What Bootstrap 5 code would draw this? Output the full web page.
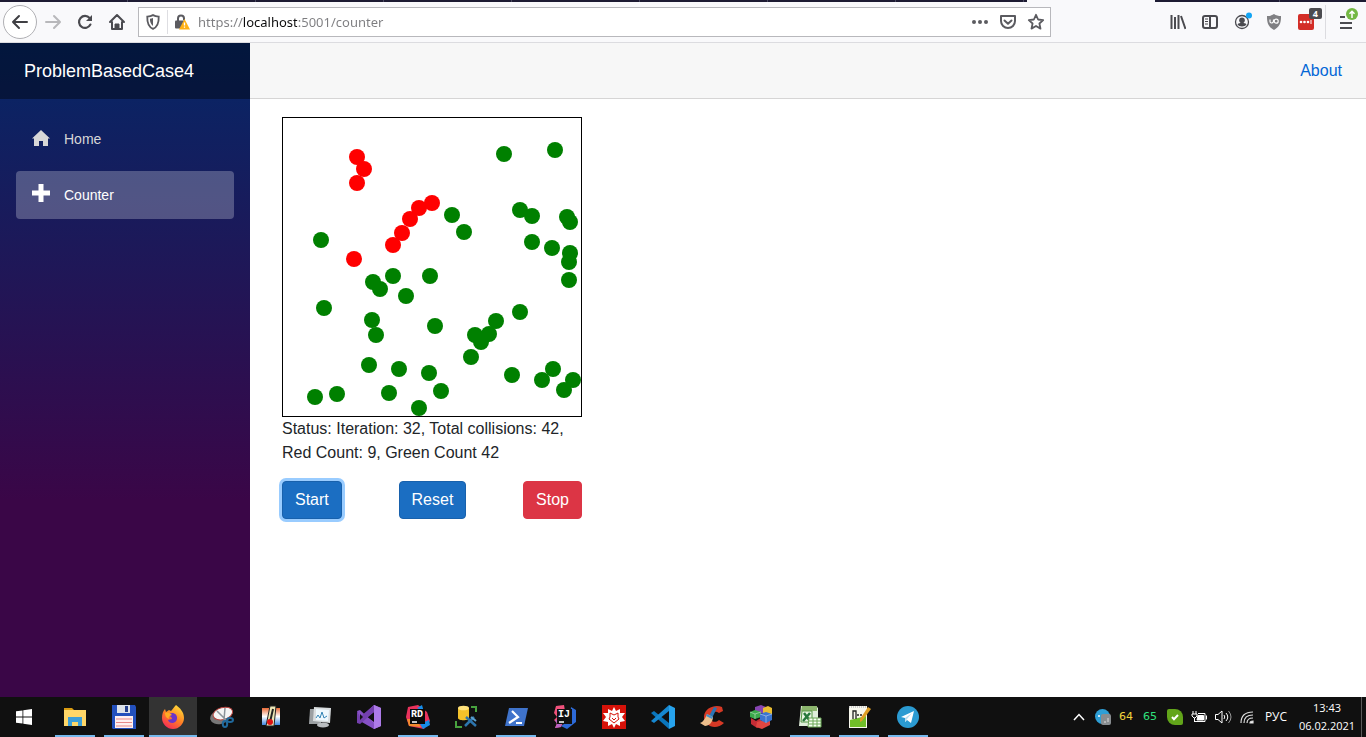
<!DOCTYPE html>
<html lang="en">
<head>
<meta charset="utf-8">
<meta name="viewport" content="width=device-width, initial-scale=1">
<title>ProblemBasedCase4</title>
<link href="https://cdn.jsdelivr.net/npm/bootstrap@5.3.0/dist/css/bootstrap.min.css" rel="stylesheet">
<style>
  body { font-family: "Liberation Sans", Arial, sans-serif; font-size: 16px; line-height: 24px; color: #212529; background: #fff; }
  button.plain { border: 0; background: none; padding: 0; display: flex; align-items: center; justify-content: center; color: inherit; }
  svg { display: block; }

  /* Browser chrome */
  .tabstrip { height: 2px; background: repeating-linear-gradient(90deg, #1d1b33 0 127px, #4a4960 127px 128px); }
  .tab-active { width: 128px; margin-right: 211px; background: #f9f9fb; }
  .toolbar { height: 41px; background: #f9f9fb; border-bottom: 1px solid #dcdce0; color: #4a4a4f; padding: 0 3px 1px 3px; }
  .tool { width: 32px; height: 32px; }
  .tool-back { width: 34px; height: 34px; border: 1px solid #b0b0b4 !important; border-radius: 50%; background: #fff !important; }
  .urlbar { height: 30px; border: 1px solid #b8b8bc; background: #fff; margin-left: 5px; margin-right: 111px; color: #5b5b60; }
  .urlbar .tool { width: 28px; height: 28px; }
  .url-sep { width: 1px; height: 24px; background: #dedee2; }
  .url-input { border: 0; outline: 0; padding: 0 0 0 2px; height: 26px; font: 13px/26px "Noto Sans", "Open Sans", sans-serif;
    background: linear-gradient(90deg, #7d7d80 0 47px, #0c0c0d 47px 101px, #7d7d80 101px);
    -webkit-background-clip: text; background-clip: text; -webkit-text-fill-color: transparent; }
  .bar-sep { width: 1px; height: 34px; background: #dcdce0; margin: 0 5px 0 3px; }
  .pip { top: 2px; right: 0; padding: 1px 4px; font: bold 9px/9px "Open Sans", sans-serif; background: #4c4c50; border-radius: 2px; color: #fff; }

  /* Application */
  .sidebar { width: 250px; background: linear-gradient(180deg, rgb(5, 39, 103) 0%, #3a0647 70%); }
  .brand-row { height: 56px; background: rgba(0, 0, 0, .4); padding-left: 24px; }
  .brand-row a { font-size: 18px; color: #fff; }
  .side-link { height: 48px; padding: 0 16px; font-size: 14px; color: #d7d7d7; border-radius: 4px; }
  .side-link.active { background: rgba(255, 255, 255, .25); color: #fff; }
  .side-icon { width: 32px; }
  .top-row { height: 56px; background: #f7f7f7; border-bottom: 1px solid #d6d5d5; padding-right: 24px; }
  .top-row a { color: #0366d6; }
  .page-body { padding: 18px 32px; }
  .sim { width: 300px; }
  .field { border: 1px solid #000; }
  .field svg { width: 100%; }
  .sim .btn { border-radius: 4px; padding: 6px 12px; font-size: 16px; line-height: 24px; }
  .btn-run { background: #1b6ec2; border-color: #1861ac; color: #fff; }
  .btn-run:focus, .btn-run.focus { background: #1b6ec2; color: #fff; box-shadow: 0 0 0 3px #99ccff; }
  .btn-halt { background: #dc3545; border-color: #dc3545; color: #fff; }

  /* Desktop taskbar */
  .taskbar { height: 40px; background: #101010; color: #fff; }
  .taskbar .slot { width: 48px; height: 40px; margin-left: 1px; }
  .taskbar .start { margin: 0 2px 0 0; }
  .slot.open { background: linear-gradient(#76b9ed, #76b9ed) center bottom / 40px 2px no-repeat; }
  .slot.current { background: linear-gradient(#76b9ed, #76b9ed) center bottom / 48px 2px no-repeat #333; }
  .tray { font: 12px/18px "Open Sans", "Noto Sans", sans-serif; }
  .tray .cell { width: 24px; height: 40px; }
  .tray .lang { width: 34px; }
  .tray .clock { width: 68px; font-size: 11px; }
  .tray .peek { width: 5px; height: 40px; border-left: 1px solid #5a5a5a; }
  .tray .temp { font: 11px/18px "DejaVu Sans", sans-serif; padding-right: 2px; }
  .tray .warm { color: #f2d43c; }
  .tray .cool { color: #2fe07c; }
</style>
</head>
<body class="d-flex flex-column min-vh-100">

<header>
  <div class="tabstrip d-flex justify-content-end"><div class="tab-active"></div></div>
  <div class="toolbar d-flex align-items-center">
    <button class="plain tool-back" aria-label="Back"><svg width="18" height="16" viewBox="0 0 18 16" fill="none" stroke="#3f3f43" stroke-width="2" stroke-linecap="round" stroke-linejoin="round"><path d="M2 8h14M8 2 2 8l6 6"/></svg></button>
    <button class="plain tool" aria-label="Forward"><svg width="18" height="16" viewBox="0 0 18 16" fill="none" stroke="#b8b8bb" stroke-width="2" stroke-linecap="round" stroke-linejoin="round"><path d="M2 8h13M10 2l6 6-6 6"/></svg></button>
    <button class="plain tool" aria-label="Reload"><svg width="16" height="16" viewBox="0 0 16 16" fill="none" stroke="#4a4a4f" stroke-width="2.2" stroke-linecap="round"><path d="M13.4 10.6A6 6 0 1 1 12.6 4"/><path d="M15 1v6H9z" fill="#4a4a4f" stroke="none"/></svg></button>
    <button class="plain tool" aria-label="Home page"><svg width="18" height="18" viewBox="0 0 18 18" fill="none" stroke="#4a4a4f" stroke-width="2" stroke-linecap="round" stroke-linejoin="round"><path d="M2 9l7-7 7 7M4 9v7h10V9"/><path d="M7 16v-5h4v5z" fill="#4a4a4f" stroke-width="1"/></svg></button>
    <div class="urlbar d-flex align-items-center flex-fill">
      <button class="plain tool" aria-label="Tracking protection"><svg width="16" height="16" viewBox="0 0 14 14"><path d="M7 1c1.800 1 3.500 1.200 5 1.300C12.200 7.500 10.600 11.500 7 13 3.400 11.500 1.800 7.500 2 2.300 3.500 2.200 5.200 2 7 1z" fill="none" stroke="#5b5b60" stroke-width="1.600"/><path d="M7 3.500v7C5 9 4.300 6.800 4.300 4.200 5.300 4.100 6 4 7 3.500z" fill="#5b5b60"/></svg></button>
      <span class="url-sep"></span>
      <button class="plain tool" aria-label="Connection is not secure"><svg width="16" height="16" viewBox="0 0 16 16"><path d="M4 7V4.500a3 3 0 0 1 6 0V6" fill="none" stroke="#5b5b60" stroke-width="2"/><rect x="1" y="6.500" width="10" height="8" rx="1" fill="#5b5b60"/><path d="M10.500 5 16 15.500H5z" fill="#ffb013"/><path d="M10.500 8.500v3M10.500 12.500v1.300" stroke="#fff" stroke-width="1.300"/></svg></button>
      <input class="url-input flex-fill" type="text" aria-label="Address" value="https://localhost:5001/counter">
      <button class="plain tool" aria-label="Page actions"><svg width="18" height="6" viewBox="0 0 18 6" fill="#5b5b60"><circle cx="3" cy="3" r="2"/><circle cx="9" cy="3" r="2"/><circle cx="15" cy="3" r="2"/></svg></button>
      <button class="plain tool" aria-label="Save to Pocket"><svg width="18" height="16" viewBox="0 0 18 16" fill="none" stroke="#5b5b60" stroke-width="2" stroke-linecap="round" stroke-linejoin="round"><path d="M2 2h14v5a7 7 0 0 1-14 0z"/><path d="M5.500 6.500 9 9.800l3.500-3.300"/></svg></button>
      <button class="plain tool" aria-label="Bookmark"><svg width="18" height="18" viewBox="0 0 18 18" fill="none" stroke="#5b5b60" stroke-width="1.800" stroke-linejoin="round"><path d="m9 1.800 2.100 4.700 5.100.6-3.800 3.400 1.100 5.100L9 13l-4.500 2.600 1.100-5.100L1.800 7.100l5.100-.6z"/></svg></button>
    </div>
    <button class="plain tool" aria-label="Library"><svg width="16" height="16" viewBox="0 0 16 16" stroke="#4a4a4f" stroke-width="2" fill="none"><path d="M1.500 1v14M5 3v12M8.500 1v14M11 2l4.500 13"/></svg></button>
    <button class="plain tool" aria-label="Sidebars"><svg width="18" height="16" viewBox="0 0 18 16" fill="none" stroke="#4a4a4f" stroke-width="2"><rect x="2" y="2" width="14" height="12" rx="2"/><path d="M9 2v12"/><path d="M4 5h3M4 7.500h3M4 10h3" stroke-width="1"/></svg></button>
    <button class="plain tool" aria-label="Account"><svg width="20" height="20" viewBox="0 0 20 20"><circle cx="10" cy="10" r="6.500" fill="none" stroke="#4a4a4f" stroke-width="1.300"/><circle cx="10" cy="8.300" r="2.800" fill="#4a4a4f"/><path d="M5.500 12.200c2-2 7-2 9 0-1.500 3-7.500 3-9 0z" fill="#4a4a4f"/><circle cx="17" cy="3.500" r="3" fill="#12a5f4"/></svg></button>
    <button class="plain tool" aria-label="Content blocker"><svg width="16" height="16" viewBox="0 0 16 16"><path d="M8 0c2 1.500 4.500 2 7 2 .2 7-1.500 11-7 14C2.500 13 .8 9 1 2c2.500 0 5-.5 7-2z" fill="#808083"/><path d="M4 5.500v2q0 1.500 1.500 1.500T7.500 7.500v-2" fill="none" stroke="#fff" stroke-width="1.200"/><circle cx="10.200" cy="7.200" r="2" fill="none" stroke="#fff" stroke-width="1.200"/></svg></button>
    <button class="plain tool position-relative" aria-label="Password manager, 4 items"><svg width="16" height="16" viewBox="0 0 16 16"><rect width="16" height="16" rx="2" fill="#d32d27"/><g fill="#fff"><circle cx="3" cy="8" r="1.300"/><circle cx="6.500" cy="8" r="1.300"/><circle cx="10" cy="8" r="1.300"/></g><path d="M13 6v4" stroke="#fff"/></svg><span class="pip position-absolute">4</span></button>
    <span class="bar-sep"></span>
    <button class="plain tool" aria-label="Menu"><svg width="24" height="32" viewBox="0 0 24 32"><path d="M5 11h5M5 17h12M5 22h12" stroke="#4a4a4f" stroke-width="2"/><circle cx="17" cy="8" r="6" fill="#74b843"/><path d="M17 12V6M14.500 7.800 17 5.300l2.500 2.500" fill="none" stroke="#fff" stroke-width="1.500"/></svg></button>
  </div>
</header>

<div class="d-flex flex-fill">
  <aside class="sidebar flex-shrink-0">
    <div class="brand-row d-flex align-items-center"><a class="text-decoration-none" href="#">ProblemBasedCase4</a></div>
    <nav class="d-flex flex-column gap-2 px-3 pt-3">
      <a class="side-link d-flex align-items-center text-decoration-none" href="#"><span class="side-icon"><svg width="18" height="18" viewBox="0 0 18 18"><path d="M9 0 0 8.500h2V16h5v-5h4v5h5V8.500h2z" fill="#d7d7d7"/></svg></span>Home</a>
      <a class="side-link active d-flex align-items-center text-decoration-none" href="#" aria-current="page"><span class="side-icon"><svg width="18" height="22" viewBox="0 0 18 22"><path d="M6.500 0h5v6.500H18v5h-6.500V18h-5v-6.500H0v-5h6.500z" fill="#fff"/></svg></span>Counter</a>
    </nav>
  </aside>
  <div class="flex-fill">
    <div class="top-row d-flex align-items-center justify-content-end"><a class="text-decoration-none" href="#">About</a></div>
    <main class="page-body">
      <div class="sim">
        <div class="field"><svg id="field" viewBox="0 0 298 298" role="img" aria-label="Simulation field"></svg></div>
        <p class="mb-3">Status: Iteration: 32, Total collisions: 42, Red Count: 9, Green Count 42</p>
        <div class="d-flex justify-content-between">
          <button class="btn btn-run focus" type="button">Start</button>
          <button class="btn btn-run" type="button">Reset</button>
          <button class="btn btn-halt" type="button">Stop</button>
        </div>
      </div>
    </main>
  </div>
</div>

<footer class="taskbar d-flex align-items-center">
  <button class="plain slot start" aria-label="Start menu"><svg width="16" height="16" viewBox="0 0 16 16" fill="#fff"><path d="M0 2.300 6.500 1.400v6.100H0zM7.300 1.300 16 0v7.500H7.300zM0 8.400h6.500v6.200L0 13.700zM7.300 8.400H16V16l-8.700-1.300z"/></svg></button>
  <button class="plain slot open" aria-label="Explorer"><svg width="24" height="24" viewBox="0 0 24 24"><path d="M1 3h8l2 2H1z" fill="#d99b12"/><path d="M1 5h22v16H1z" fill="#ffd768"/><path d="M5 12h14v9h-4v-4H9v4H5z" fill="#3d9fd8"/></svg></button>
  <button class="plain slot open" aria-label="Save tool"><svg width="24" height="24" viewBox="0 0 24 24"><path d="M0 0h23l1 2v22H1l-1-1z" fill="#2350bd"/><path d="M5 0h13v8H5z" fill="#dde3ea"/><path d="M13 1h3v6h-3z" fill="#24408e"/><path d="M3 11h18v12H3z" fill="#fff0f0"/><path d="M4 14h16M4 17.500h16M4 21h16" stroke="#e78989"/></svg></button>
  <button class="plain slot current" aria-label="Firefox"><svg width="24" height="24" viewBox="0 0 24 24"><defs><linearGradient id="fx" x1=".8" y1="0" x2=".2" y2="1"><stop stop-color="#ffe13a"/><stop offset=".5" stop-color="#ff8124"/><stop offset="1" stop-color="#f5245c"/></linearGradient></defs><path d="M15 0c4 3 8 7 8 13 0 6-5 11-11 11S1 19 1 13c0-4 1-7 3-9l1 3 3-2 2 1c2-2 3-4 5-6z" fill="url(#fx)"/><path d="M7 10c3-4 10-2 9 4-1 5-8 5-9 1l4-1c0-2-2-3-4-4z" fill="#6b35c9"/><path d="M4 8c3-1 5 0 7 2-3 1-4 2-3 4-3-1-4-3-4-6z" fill="#ffab24"/></svg></button>
  <button class="plain slot" aria-label="Snipping tool"><svg width="24" height="24" viewBox="0 0 24 24"><ellipse cx="10" cy="12" rx="10" ry="7" fill="#777" transform="rotate(-15 10 12)"/><ellipse cx="13" cy="8.500" rx="10" ry="6" fill="#f4f4f4" stroke="#b6423d" transform="rotate(-15 13 9)"/><path d="m7 6 9 9M15 3l-1 12" stroke="#8a9299" stroke-width="1.500"/><g fill="none" stroke="#20699c" stroke-width="2"><ellipse cx="15" cy="19" rx="2.200" ry="3"/><ellipse cx="20" cy="15" rx="3" ry="2"/></g></svg></button>
  <button class="plain slot" aria-label="Temperature monitor"><svg width="24" height="24" viewBox="0 0 24 24"><defs><linearGradient id="tm" x2="0" y2="1"><stop stop-color="#e96a36"/><stop offset=".5" stop-color="#fff"/><stop offset="1" stop-color="#3c85df"/></linearGradient></defs><path d="M3 3h18v17H3z" fill="url(#tm)"/><path d="M11 1h6l-2 20H7z" fill="#ece6b6" stroke="#222"/><path d="m14 4-3 13" stroke="#222" stroke-width="2"/><circle cx="11" cy="17" r="3" fill="#dd1111"/></svg></button>
  <button class="plain slot" aria-label="Performance monitor"><svg width="24" height="24" viewBox="0 0 24 24"><path d="M2 4h11v15H1z" fill="#9b9fa2"/><path d="m6 2 17 1-1 15-17-2z" fill="#d9dddf"/><path d="m8 4 13 1-1 11-12-1z" fill="#eef8fd"/><path d="m8 13 2-3 2 3 2-6 2 6 3-2" fill="none" stroke="#3484b5"/><ellipse cx="15" cy="20" rx="6" ry="2.500" fill="#babdc0"/></svg></button>
  <button class="plain slot" aria-label="Visual Studio"><svg width="24" height="24" viewBox="0 0 24 24"><path d="m17 0 7 3v18l-7 3L4 12z" fill="#9a5fd7"/><path d="m17 7-7 5 7 5z" fill="#101010"/><path d="M0 6l3-1 15 14-1 5L3 16z" fill="#8651c5"/><path d="M0 6v12l3 1 14-12V0L3 12z" fill="#7440ae"/><path d="M3 9v6l3-3z" fill="#101010"/><path d="m17 0 7 3v18l-7 3z" fill="#ad7be8"/></svg></button>
  <button class="plain slot open" aria-label="Rider"><svg width="24" height="24" viewBox="0 0 24 24"><path d="M2 2 12 0l9 7 3 9-6 8-15-3-3-9z" fill="#e9325c"/><path d="m11 3 5-3 2 7zM14 19l9-4 1 5-7 4z" fill="#168dea"/><path d="M1 14h9l5 8-12-1z" fill="#f18a2d"/><path d="M4 4h15v15H4z" fill="#090909"/><text x="5" y="12" font-family="Liberation Mono" font-size="10" font-weight="700" fill="#fff">RD</text><path d="M6 17h5" stroke="#fff" stroke-width="1.500"/></svg></button>
  <button class="plain slot" aria-label="Database tools"><svg width="24" height="24" viewBox="0 0 24 24"><path d="M3 3v10c0 3 11 3 11 0V3z" fill="#f4c22a"/><ellipse cx="8.500" cy="3" rx="5.500" ry="2.300" fill="#ffe27b"/><path d="M16 2h5v5M1 16v6h6" fill="none" stroke="#48a33f" stroke-width="2"/><path d="m10 21 9-9M11 12l10 9" stroke="#2d75ad" stroke-width="2.500"/><path d="m16 12 5 4" stroke="#5d9fce" stroke-width="2"/></svg></button>
  <button class="plain slot open" aria-label="PowerShell"><svg width="24" height="24" viewBox="0 0 24 24"><path d="M5 3h19l-4 18H1z" fill="#3f73cb"/><path d="m8 6 6 6-9 6M12 18h6" fill="none" stroke="#fff" stroke-width="2.200"/></svg></button>
  <button class="plain slot" aria-label="IntelliJ IDEA"><svg width="24" height="24" viewBox="0 0 24 24"><path d="m3 1 8-1 2 12-5 10-6 1 2-5-3-3 3-3-3-4z" fill="#f0527c"/><path d="M2 15h7l-1 7-6 1 2-4z" fill="#b765c6"/><path d="m18 2 5 3v12l-9 7-6-3 9-6z" fill="#2d6ad8"/><path d="M4 4h15v15H4z" fill="#111"/><text x="5" y="12" font-family="Liberation Mono" font-size="10" font-weight="700" fill="#fff">IJ</text><path d="M6 17h5" stroke="#fff" stroke-width="1.500"/></svg></button>
  <button class="plain slot" aria-label="Mathematica"><svg width="24" height="24" viewBox="0 0 24 24"><path d="M0 0h24v24H0z" fill="#d51209"/><path d="m12 2 2 4 4-2v4l5 0-3 4 3 4-5 1v4l-4-2-2 4-2-4-4 2v-4l-5-1 3-4-3-4 5 0V4l4 2z" fill="#fff"/><path d="m8 8 4 2 4-2v4l1 2-5 4-5-4 1-2zM10 13l2 2 2-2" fill="none" stroke="#d51209"/></svg></button>
  <button class="plain slot" aria-label="Visual Studio Code"><svg width="24" height="24" viewBox="0 0 24 24"><path d="m0 8 3-2 15 12v6z" fill="#0a75bb"/><path d="m0 16 3 2L18 6V0z" fill="#1688d1"/><path d="m18 0 6 3v18l-6 3z" fill="#27a3ed"/></svg></button>
  <button class="plain slot" aria-label="Cleaner"><svg width="24" height="24" viewBox="0 0 24 24"><path d="M22 2C16-1 5 2 4 11c-1 10 12 15 20 7l-5-3c-4 4-10 1-9-4 1-5 6-5 9-3l4-2z" fill="#d63925"/><path d="m14 2 3 1-5 10-3-2z" fill="#2b75b5"/><path d="m7 9 6 3c0 5-4 9-8 9l-5-3c3-1 5-4 7-9z" fill="#edbe8b"/><path d="m7 9 6 3-1 2-6-3z" fill="#458fc8"/></svg></button>
  <button class="plain slot" aria-label="Blocks"><svg width="24" height="24" viewBox="0 0 24 24"><path d="m6 2 6-2 5 2v5l-6 2-5-3z" fill="#8745b2"/><path d="m14 3 5-2 4 2v6l-5 2-4-2z" fill="#e9bd31"/><path d="m2 13 5 3 5-3v8l-4 2-6-4z" fill="#c62c35"/><path d="m8 17 7-2 6 1v4l-8 4-6-2z" fill="#e04641"/><path d="m1 7 5-2 6 2v5l-6 2-5-2z" fill="#3ba84b"/><path d="m11 9 6-2 6 2v6l-6 3-6-3z" fill="#3a75d0"/><path d="m11 9 6 2 6-2M17 11v7M1 7l5 2 6-2M6 9v5" fill="none" stroke="#ffffff66"/></svg></button>
  <button class="plain slot open" aria-label="Excel"><svg width="24" height="24" viewBox="0 0 24 24"><path d="M3 1h15l2 2v18H1z" fill="#dfeeda"/><path d="M4 1h15v5H3z" fill="#8cb56d"/><path d="M4 6h10v11H3z" fill="#e8f5e1" stroke="#559644"/><path d="m6 8 6 8M12 8l-7 8" stroke="#26773b" stroke-width="2.500"/><path d="M11 13h12v9H10z" fill="#f6fff2" stroke="#6ba756"/><path d="M11 16h12M11 19h12M15 13v9M19 13v9" stroke="#6ba756"/></svg></button>
  <button class="plain slot open" aria-label="Text editor"><svg width="24" height="24" viewBox="0 0 24 24"><path d="M2 1h18v22H2z" fill="#f7f7ed"/><path d="M3 15q8-2 16-4v11H3z" fill="#70bd29"/><path d="M2 2h18" stroke="#ccc" stroke-width="2" stroke-dasharray="1 1"/><path d="M6 14V6h3v8M10 10h2M13 10h2" fill="none" stroke="#222" stroke-width="1.300"/><path d="m21 2 3 2-9 12-2 1v-3z" fill="#df9e25"/></svg></button>
  <button class="plain slot open" aria-label="Telegram"><svg width="22" height="22" viewBox="0 0 22 22"><circle cx="11" cy="11" r="11" fill="#2b9bd2"/><path d="m4 11 13-6-3 12-4-3-2 2v-4z" fill="#fff"/><path d="m8 12 7-5-5 6-2 3z" fill="#b8ddef"/></svg></button>

  <div class="tray d-flex align-items-center ms-auto">
    <button class="plain cell" aria-label="Show hidden icons"><svg width="12" height="8" viewBox="0 0 12 8" fill="none" stroke="#fff" stroke-width="1.500"><path d="m1 7 5-5.500L11 7"/></svg></button>
    <button class="plain cell" aria-label="Messenger"><svg width="16" height="16" viewBox="0 0 16 16"><circle cx="7.500" cy="7.500" r="7.500" fill="#2e9fd6"/><circle cx="4" cy="7" r="1" fill="#fff"/><rect x="6" y="5" width="10" height="11" rx="2" fill="#888d90"/><path d="M9 13h2M13 9v4" stroke="#ddd"/></svg></button>
    <button class="plain cell temp"><span class="warm">64</span></button>
    <button class="plain cell temp"><span class="cool">65</span></button>
    <button class="plain cell" aria-label="Protection on"><svg width="16" height="16" viewBox="0 0 16 16"><path d="M2 0h6a8 8 0 0 1 8 8v6a2 2 0 0 1-2 2H8a8 8 0 0 1-8-8V2a2 2 0 0 1 2-2z" fill="#62a51a"/><path d="m5 8 2 2.300L11 6" fill="none" stroke="#fff" stroke-width="2"/></svg></button>
    <button class="plain cell" aria-label="Battery"><svg width="16" height="12" viewBox="0 0 16 12" fill="none" stroke="#fff"><path d="M2 0v3M5 0v3M1 3h5v2L4 7H3L1 5zM3.500 7v4M7 2.500h7v8H4"/><path d="M7 4.500h5.500v4.500H6z" fill="#fff"/><path d="M15.500 4.500v4"/></svg></button>
    <button class="plain cell" aria-label="Volume"><svg width="17" height="14" viewBox="0 0 17 14" fill="none" stroke="#fff"><path d="M.5 4.500H3l4-3.500v12L3 9.500H.5zM9 5q1.500 2 0 4M11 3q3.500 4 0 8"/><path d="M13.500 1q5 6 0 12" stroke="#999"/></svg></button>
    <button class="plain cell" aria-label="Network"><svg width="14" height="14" viewBox="0 0 14 14" fill="none" stroke="#ddd" stroke-width="1.200"><path d="M1 13Q1 2 13 2M4 13Q4 5 13 5M7 13Q7 8 13 8"/><path d="M10 13q0-2 3-2v2z" fill="#fff"/></svg></button>
    <button class="plain lang">РУС</button>
    <div class="clock text-center">13:43<br>06.02.2021</div>
    <button class="plain peek" aria-label="Show desktop"></button>
  </div>
</footer>

<script src="https://cdn.jsdelivr.net/npm/bootstrap@5.3.0/dist/js/bootstrap.bundle.min.js"></script>
<script>
  // Ball centres inside the 298 x 298 field
  const balls = {
    green: [[221,36],[272,32],[169,97],[181,114],[237,92],[249,98],[284,99],[287,104],[249,124],[269,130],[287,135],[286,144],[286,162],[38,122],[90,164],[97,171],[110,158],[147,158],[123,178],[41,190],[89,202],[93,217],[152,208],[86,247],[116,251],[146,255],[32,279],[54,276],[106,275],[158,273],[136,290],[237,194],[213,203],[192,217],[206,216],[198,224],[188,239],[229,257],[259,262],[270,251],[290,262],[281,272]],
    red: [[74,39],[81,51],[74,65],[149,85],[136,90],[127,101],[119,115],[110,127],[71,141]]
  };
  const field = document.getElementById("field");
  for (const [color, points] of Object.entries(balls)) {
    for (const [x, y] of points) {
      const ball = document.createElementNS("http://www.w3.org/2000/svg", "circle");
      ball.setAttribute("cx", x);
      ball.setAttribute("cy", y);
      ball.setAttribute("r", 8);
      ball.setAttribute("fill", color);
      field.appendChild(ball);
    }
  }
</script>
</body>
</html>
